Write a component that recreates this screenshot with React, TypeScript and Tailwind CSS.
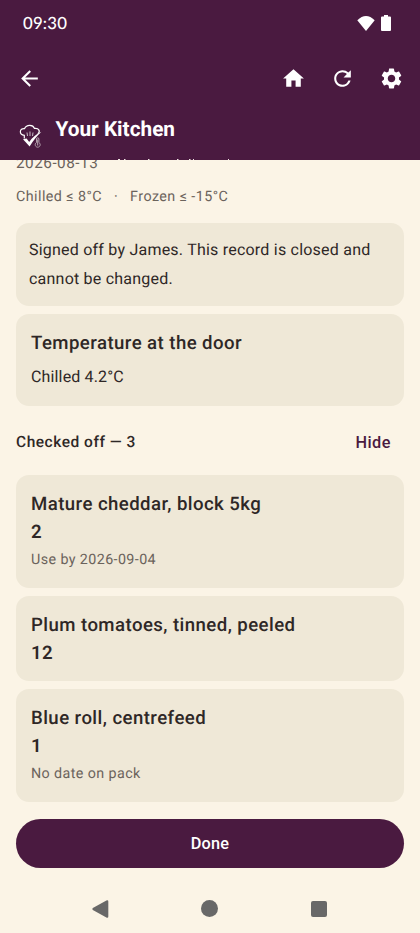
import React from "react";

function StatusBar() {
  return (
    <div className="flex h-[46px] items-center justify-between pl-[23px] pr-[29px]">
      <span className="font-['Lato',sans-serif] text-[16.8px] font-medium leading-none tracking-[0.2px]">09:30</span>
      <div className="flex items-center gap-[6px]">
        <svg className="h-[15px] w-[18px]" viewBox="0 0 18 15" fill="currentColor">
          <path d="M0.3 4.3Q9-4.2 17.7 4.3L9 15Z" />
        </svg>
        <svg className="h-4 w-[10px]" viewBox="0 0 10 16" fill="currentColor">
          <path d="M3 0h4v1.6h2A1 1 0 0 1 10 2.6V15a1 1 0 0 1-1 1H1a1 1 0 0 1-1-1V2.6a1 1 0 0 1 1-1h2Z" />
        </svg>
      </div>
    </div>
  );
}

function Toolbar() {
  return (
    <div className="flex h-[65px] items-center pl-[16.5px] pr-[16px]">
      <svg className="size-[25px]" viewBox="0 0 24 24" fill="currentColor">
        <path d="M20 11H7.83l5.59-5.59L12 4l-8 8 8 8 1.41-1.41L7.83 13H20v-2z" />
      </svg>
      <div className="ml-auto flex gap-[24px]">
        <svg className="size-[25px]" viewBox="0 0 24 24" fill="currentColor">
          <path d="M10 20v-6h4v6h5v-8h3L12 3 2 12h3v8z" />
        </svg>
        <svg className="size-[25px]" viewBox="0 0 24 24" fill="currentColor">
          <path d="M17.65 6.35A7.958 7.958 0 0 0 12 4c-4.42 0-7.99 3.58-7.99 8s3.57 8 7.99 8c3.73 0 6.84-2.55 7.73-6h-2.08A5.99 5.99 0 0 1 12 18c-3.31 0-6-2.69-6-6s2.69-6 6-6c1.66 0 3.14.69 4.22 1.78L13 11h7V4l-2.35 2.35z" />
        </svg>
        <svg className="size-[25px]" viewBox="0 0 24 24" fill="currentColor">
          <path d="M19.14 12.94c.04-.3.06-.61.06-.94 0-.32-.02-.64-.07-.94l2.03-1.58a.49.49 0 0 0 .12-.61l-1.92-3.32a.488.488 0 0 0-.59-.22l-2.39.96c-.5-.38-1.03-.7-1.62-.94l-.36-2.54a.484.484 0 0 0-.48-.41h-3.84c-.24 0-.43.17-.47.41l-.36 2.54c-.59.24-1.13.57-1.62.94l-2.39-.96c-.22-.08-.47 0-.59.22L2.74 8.87c-.12.21-.08.47.12.61l2.03 1.58c-.05.3-.09.63-.09.94s.02.64.07.94l-2.03 1.58a.49.49 0 0 0-.12.61l1.92 3.32c.12.22.37.29.59.22l2.39-.96c.5.38 1.03.7 1.62.94l.36 2.54c.05.24.24.41.48.41h3.84c.24 0 .44-.17.47-.41l.36-2.54c.59-.24 1.13-.56 1.62-.94l2.39.96c.22.08.47 0 .59-.22l1.92-3.32c.12-.22.07-.47-.12-.61l-2.01-1.58zM12 15.6c-1.98 0-3.6-1.62-3.6-3.6s1.62-3.6 3.6-3.6 3.6 1.62 3.6 3.6-1.62 3.6-3.6 3.6z" />
        </svg>
      </div>
    </div>
  );
}

function Logo() {
  return (
    <svg className="mt-[13px] h-[25px] w-[24px]" viewBox="0 0 24 25" fill="none" stroke="#fff" strokeWidth="1.2">
      <path d="M5.3 14.5v-3.2C-.2 10.6.2 4 5.6 4.6 7.5.4 14 .4 15.4 4.4c4.8-.6 6.2 3.4 3.4 5.4" />
      <path d="M8 8.5l.5 3.5M11 7.5v4.5M14 8.5l-.5 3.5" strokeWidth=".7" />
      <path d="M4 15.2l3.6-.8 2.6 3.6Q14.5 11.5 22.5 7.8 16 13.5 10.6 22.6Z" fill="#fff" stroke="none" />
      <path d="M17.5 18.5V15a1.2 1.2 0 0 1 2.4 0v3.5a2.5 2.5 0 1 1-2.4 0Z" stroke="#b9a8b2" strokeWidth=".9" />
      <path d="M18.7 15.5v6" stroke="#b9a8b2" strokeWidth="1" />
    </svg>
  );
}

function Card({ title, quantity, note, className }: { title: string; quantity: string; note?: string; className: string }) {
  return (
    <section className={`rounded-[13px] bg-[#efe8d7] px-[15px] pt-[15px] ${className}`}>
      <h2 className="text-[18.6px] font-medium leading-[28px] tracking-[0.44px]">{title}</h2>
      <p className="text-[18.6px] font-semibold leading-[28px] tracking-[0.4px]">{quantity}</p>
      {note && <p className="text-[14.3px] leading-[29px] tracking-[0.4px] text-[#6b635c]">{note}</p>}
    </section>
  );
}

export default function App() {
  return (
    <div className="flex h-[933px] w-[420px] flex-col overflow-hidden bg-[#fbf4e6] font-['Roboto',sans-serif] text-[#2e2726] [text-rendering:geometricPrecision]">
      <header className="flex h-[160px] shrink-0 flex-col bg-[#4a1a40] text-white">
        <StatusBar />
        <Toolbar />
        <div className="flex pl-[19px]">
          <Logo />
          <h1 className="ml-[12.5px] mt-[5px] text-[20.8px] font-bold leading-[28px]">Your Kitchen</h1>
        </div>
        <svg className="ml-[117px] mt-auto h-px w-[113px]" viewBox="0 0 113 1" fill="#efe6e2">
          <path d="M1 0h2v1H1zM7 0h1.5v1H7zM31 0h1.5v1H31zM60 0h1.5v1H60zM72 0h1.5v1H72zM76 0h1v1h-1zM111 0h1v1h-1z" />
        </svg>
      </header>
      <main className="flex h-[659px] shrink-0 flex-col px-4">
        <div className="flex h-[13px] shrink-0 items-end overflow-hidden text-[15.3px] leading-[20px] tracking-[0.5px] text-[#6b635c]">
          <span>2026-08-13</span>
        </div>
        <div className="mt-[14px] flex h-[20px] items-center whitespace-pre text-[14.3px] leading-[20px] tracking-[0.44px] text-[#6b635c]">
          Chilled ≤ 8°C   ·   Frozen ≤ -15°C
        </div>
        <section className="mt-[16px] h-[83px] rounded-[13px] bg-[#efe8d7] px-[13px] pt-[12px] text-[16px] leading-[29px] tracking-[0.22px]">
          Signed off by James. This record is closed and cannot be changed.
        </section>
        <section className="mt-[8px] h-[92px] rounded-[13px] bg-[#efe8d7] px-[15px] pt-[15px]">
          <h2 className="text-[18.6px] font-medium leading-[28px] tracking-[0.44px]">Temperature at the door</h2>
          <p className="mt-[5px] text-[16px] leading-[29px] tracking-[0.15px]">Chilled 4.2°C</p>
        </section>
        <div className="flex h-[69px] items-center justify-between pr-[13px] pt-[5px]">
          <h3 className="text-[15.5px] font-medium tracking-[0.52px]">Checked off — 3</h3>
          <button className="text-[16.3px] font-medium tracking-[0.5px] text-[#4a1a40]">Hide</button>
        </div>
        <div className="flex flex-col gap-[8px]">
          <Card title="Mature cheddar, block 5kg" quantity="2" note="Use by 2026-09-04" className="h-[113px]" />
          <Card title="Plum tomatoes, tinned, peeled" quantity="12" className="h-[85px]" />
          <Card title="Blue roll, centrefeed" quantity="1" note="No date on pack" className="h-[113px]" />
        </div>
      </main>
      <div className="px-4">
        <button className="h-[49px] w-full rounded-full bg-[#4a1a40] pt-px text-[16.3px] font-medium tracking-[0.2px] text-white">Done</button>
      </div>
      <nav className="flex h-[65px] items-center justify-between pl-[92px] pr-[93px] pt-[16px] text-[#686868]">
        <svg className="h-[18px] w-[17px]" viewBox="0 0 17 18" fill="currentColor">
          <path d="M.8 8Q0 9 .8 10L14.4 17.6Q16.3 18.3 16.3 16.5V1.5Q16.3-.3 14.4.5Z" />
        </svg>
        <span className="mr-px size-[17px] rounded-full bg-[#686868]" />
        <span className="size-4 rounded-[2px] bg-[#686868]" />
      </nav>
    </div>
  );
}
